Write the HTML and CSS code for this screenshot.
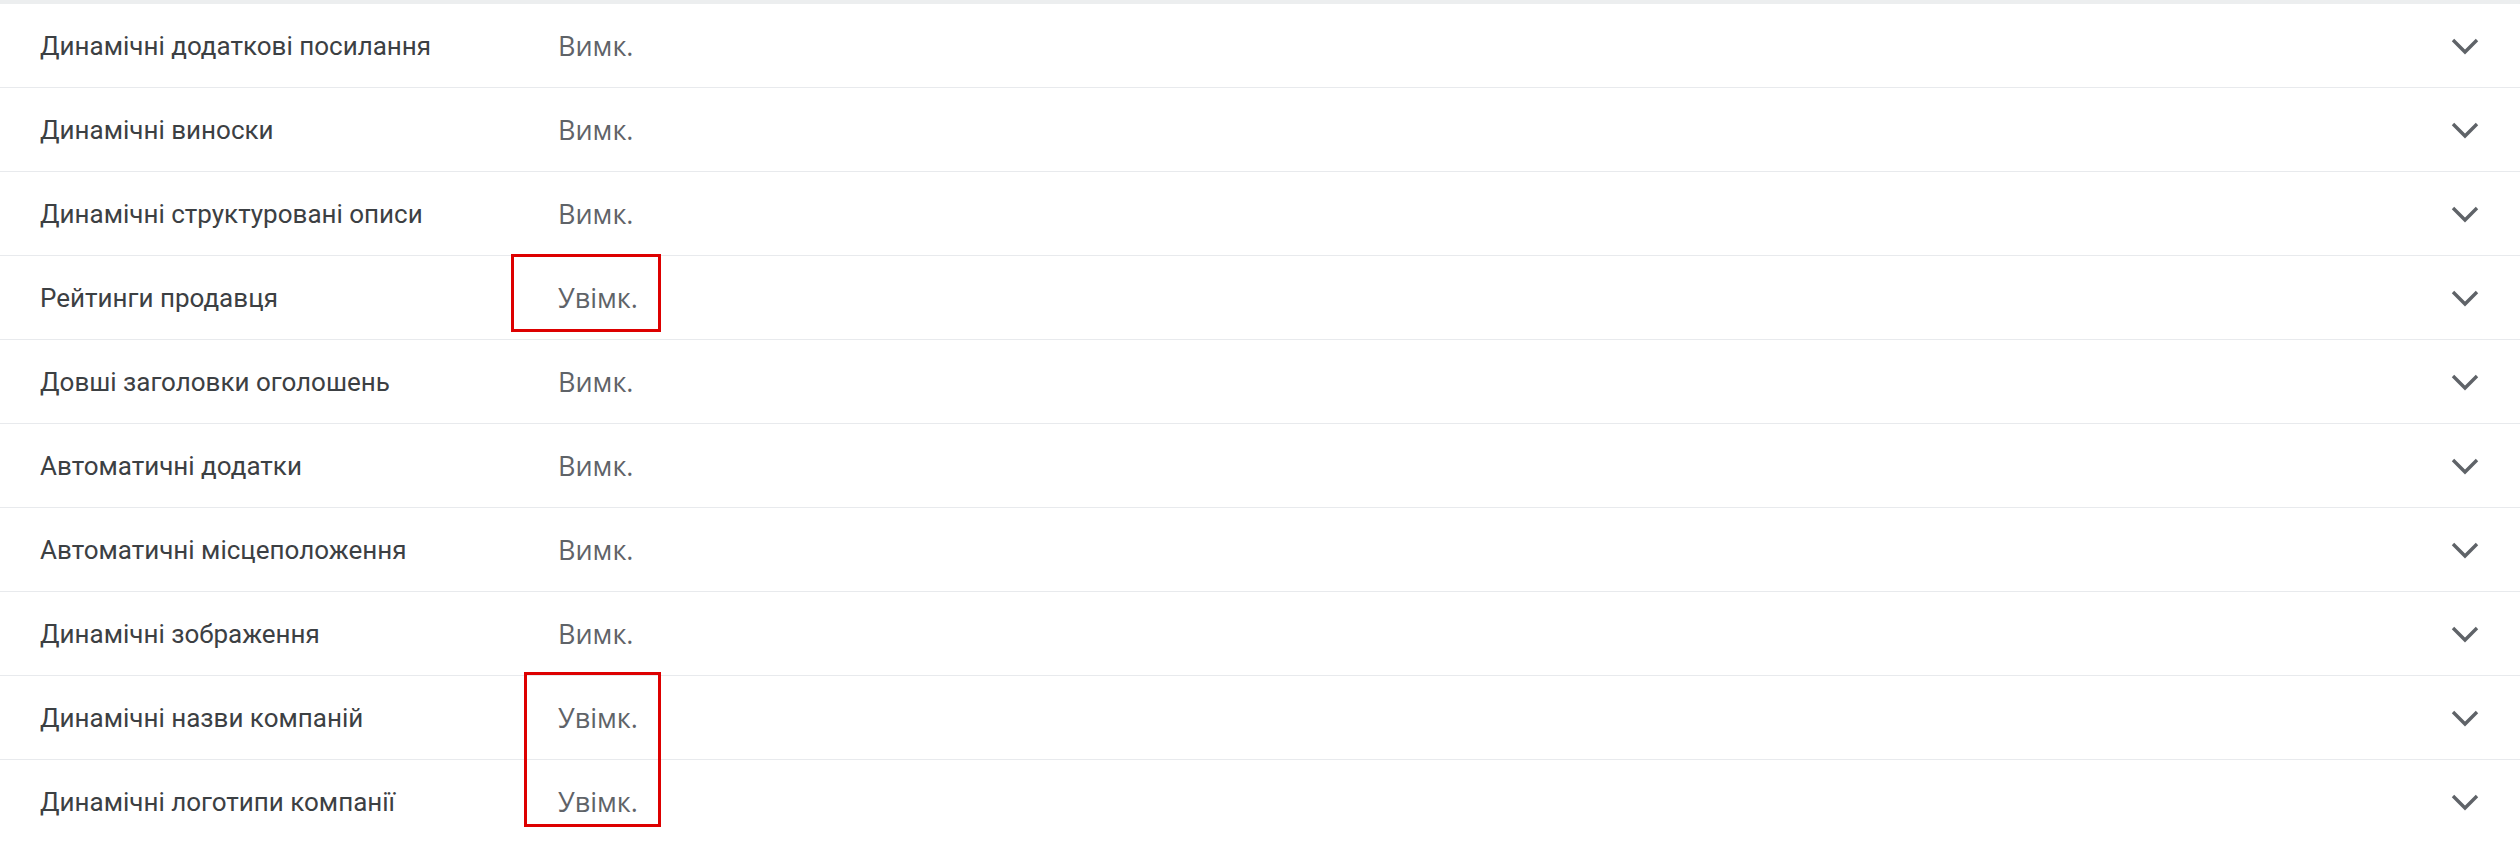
FILE: index.html
```html
<!DOCTYPE html>
<html lang="uk">
<head>
	<meta charset="UTF-8">
	<meta name="viewport" content="width=device-width, initial-scale=1.0">
	<title>Розширення</title>
	<link rel="stylesheet" href="styles.css">
</head>
<body>
	<div class="card">
		<div class="row">
			<div class="label">Динамічні додаткові посилання</div>
			<div class="value">Вимк.</div>
			<svg class="chevron" viewBox="0 0 48 48"><polyline points="12,18 24,30 36,18"/></svg>
		</div>
		<div class="row">
			<div class="label">Динамічні виноски</div>
			<div class="value">Вимк.</div>
			<svg class="chevron" viewBox="0 0 48 48"><polyline points="12,18 24,30 36,18"/></svg>
		</div>
		<div class="row">
			<div class="label">Динамічні структуровані описи</div>
			<div class="value">Вимк.</div>
			<svg class="chevron" viewBox="0 0 48 48"><polyline points="12,18 24,30 36,18"/></svg>
		</div>
		<div class="row">
			<div class="label">Рейтинги продавця</div>
			<div class="value">Увімк.</div>
			<svg class="chevron" viewBox="0 0 48 48"><polyline points="12,18 24,30 36,18"/></svg>
		</div>
		<div class="row">
			<div class="label">Довші заголовки оголошень</div>
			<div class="value">Вимк.</div>
			<svg class="chevron" viewBox="0 0 48 48"><polyline points="12,18 24,30 36,18"/></svg>
		</div>
		<div class="row">
			<div class="label">Автоматичні додатки</div>
			<div class="value">Вимк.</div>
			<svg class="chevron" viewBox="0 0 48 48"><polyline points="12,18 24,30 36,18"/></svg>
		</div>
		<div class="row">
			<div class="label">Автоматичні місцеположення</div>
			<div class="value">Вимк.</div>
			<svg class="chevron" viewBox="0 0 48 48"><polyline points="12,18 24,30 36,18"/></svg>
		</div>
		<div class="row">
			<div class="label">Динамічні зображення</div>
			<div class="value">Вимк.</div>
			<svg class="chevron" viewBox="0 0 48 48"><polyline points="12,18 24,30 36,18"/></svg>
		</div>
		<div class="row">
			<div class="label">Динамічні назви компаній</div>
			<div class="value">Увімк.</div>
			<svg class="chevron" viewBox="0 0 48 48"><polyline points="12,18 24,30 36,18"/></svg>
		</div>
		<div class="row">
			<div class="label">Динамічні логотипи компанії</div>
			<div class="value">Увімк.</div>
			<svg class="chevron" viewBox="0 0 48 48"><polyline points="12,18 24,30 36,18"/></svg>
		</div>

		<!-- позначки поверх скріншота -->
		<div class="mark mark-one"></div>
		<div class="mark mark-two"></div>
	</div>
</body>
</html>
```

FILE: styles.css
```css
body {
	margin: 0;
	background-color: white;
	font-family: Roboto, "Noto Sans", sans-serif;
}

.card {
	position: relative;
	border-top: solid #eceeef 4px;
	overflow: hidden;
}

.row {
	display: flex;
	align-items: center;
	height: 83px;
	border-bottom: solid #e8eaed 1px;
	padding-left: 40px;
	padding-right: 31px;
}

.label {
	width: 518px;
	font-size: 26px;
	color: #3c4043;
}

.value {
	flex: 1;
	font-family: "Open Sans", Roboto, sans-serif;
	font-size: 27px;
	font-weight: 500;
	color: #5f6368;
}

.chevron {
	width: 48px;
	height: 48px;
}

.chevron polyline {
	fill: none;
	stroke: #5f6368;
	stroke-width: 3.4;
}

.mark {
	position: absolute;
	border: solid #dd0000 3px;
}

.mark-one {
	left: 511px;
	top: 250px;
	width: 144px;
	height: 72px;
}

.mark-two {
	left: 524px;
	top: 668px;
	width: 131px;
	height: 149px;
}
```
